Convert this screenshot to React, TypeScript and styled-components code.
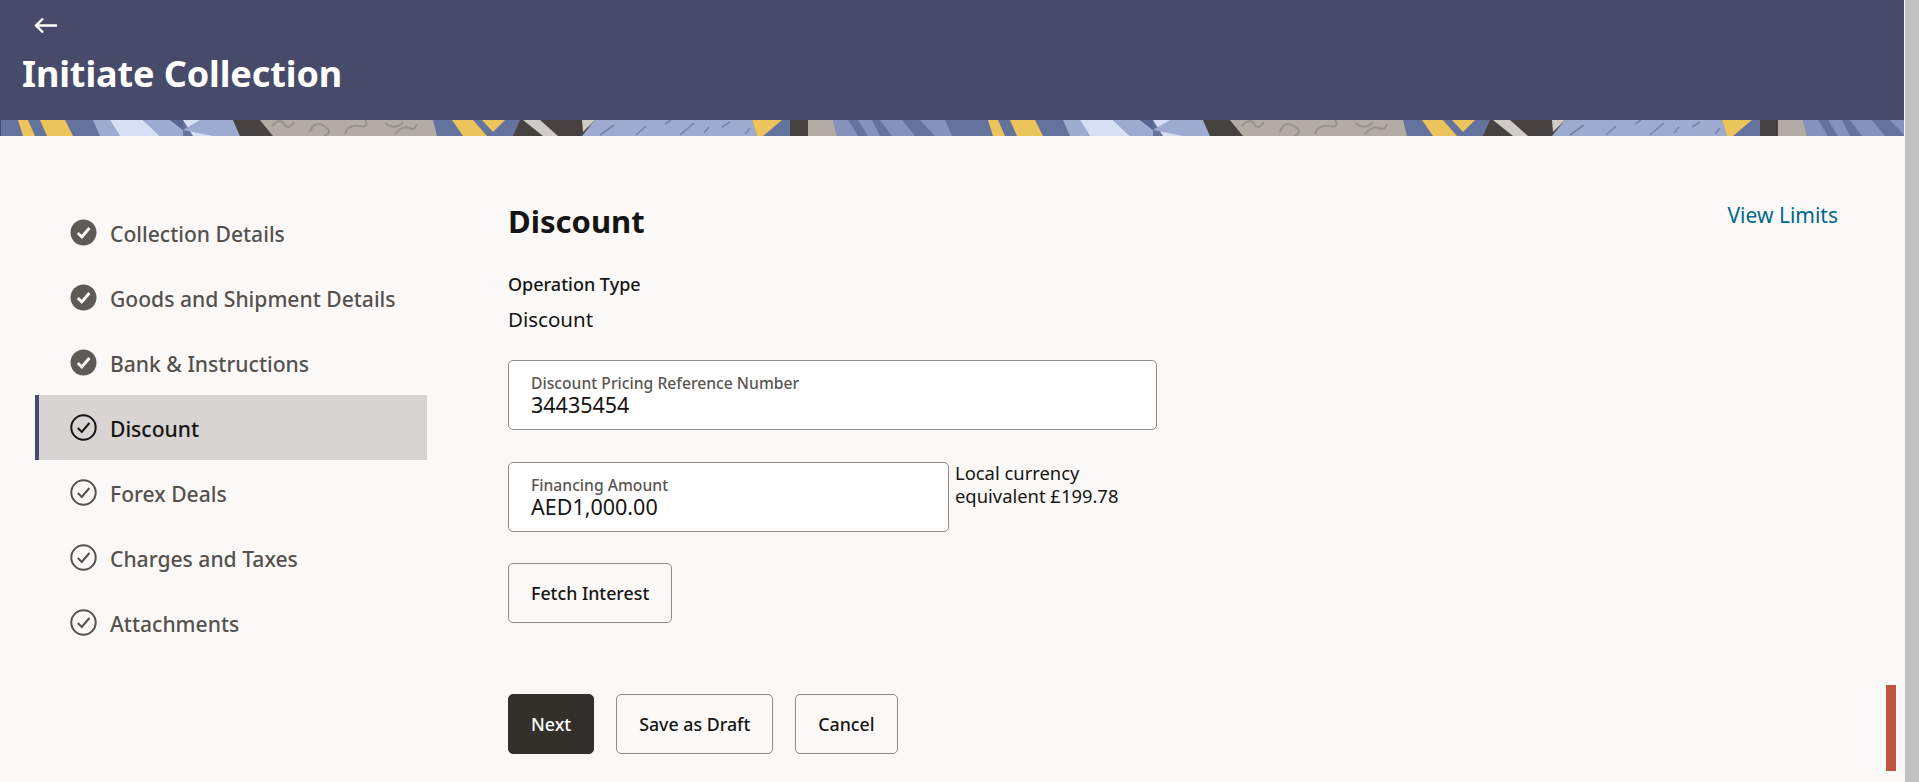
import React from 'react';
import styled, { createGlobalStyle } from 'styled-components';

const GlobalStyle = createGlobalStyle`
  html, body {
    margin: 0;
    height: 100%;
    overflow: hidden;
    background: #fbf9f8;
    font-family: "Noto Sans", "Open Sans", Arial, sans-serif;
  }
`;

const Shell = styled.div`
  display: flex;
  height: 782px;
  width: 1919px;
`;

const Page = styled.div`
  flex: 1;
  min-width: 0;
  display: flex;
  flex-direction: column;
`;

const ScrollTrack = styled.div`
  width: 14px;
  margin-left: 1px;
  background: #c1c1c1;
`;

const Banner = styled.header`
  background: #474b69;
  height: 120px;
  box-sizing: border-box;
  padding: 16px 0 0 22px;
  color: #fff;
`;

const BackButton = styled.button`
  display: block;
  border: 0;
  background: none;
  color: #fff;
  padding: 0 0 0 12px;
  height: 18px;
  cursor: pointer;
`;

const PageTitle = styled.h1`
  margin: 18px 0 0;
  font-size: 36px;
  line-height: 44px;
  font-weight: 700;
  letter-spacing: -0.1px;
`;

const Strip = styled.svg`
  display: block;
  width: 100%;
  height: 16px;
  background: #474b69;
`;

const Body = styled.div`
  flex: 1;
  position: relative;
  display: flex;
`;

const Sidebar = styled.nav`
  width: 392px;
  margin-left: 35px;
  padding-top: 64px;
`;

const StepRow = styled.div<{ $active?: boolean }>`
  display: flex;
  align-items: center;
  gap: 13px;
  height: 65px;
  box-sizing: border-box;
  padding-left: 31px;
  border-left: 4px solid ${p => (p.$active ? '#474b69' : 'transparent')};
  background: ${p => (p.$active ? '#d8d4d3' : 'transparent')};
  color: ${p => (p.$active ? '#161513' : '#55514e')};
  font-size: 21.1px;
  font-weight: 500;
`;

const StepName = styled.span`
  padding-top: 1px;
`;

const Main = styled.main`
  flex: 1;
  margin-left: 81px;
  padding: 65px 66px 0 0;
`;

const TitleRow = styled.div`
  display: flex;
  justify-content: space-between;
  align-items: flex-start;
`;

const SectionTitle = styled.h2`
  margin: 0;
  font-size: 31px;
  line-height: 40px;
  font-weight: 700;
  color: #161513;
`;

const LimitsLink = styled.a`
  margin-top: 1px;
  font-size: 21px;
  line-height: 26px;
  color: #00688c;
  cursor: pointer;
`;

const FieldLabel = styled.div`
  margin-top: 31px;
  font-size: 18px;
  line-height: 24px;
  font-weight: 500;
  color: #161513;
`;

const FieldValue = styled.div`
  margin-top: 9px;
  font-size: 20.5px;
  line-height: 28px;
  color: #161513;
`;

const InputBox = styled.div<{ $width: number }>`
  width: ${p => p.$width}px;
  height: 70px;
  box-sizing: border-box;
  padding: 12px 22px 0;
  background: #fff;
  border: 1px solid #8f8c89;
  border-radius: 5px;
`;

const InputLabel = styled.div`
  font-size: 15.7px;
  line-height: 20px;
  font-weight: 500;
  color: #5b5652;
`;

const InputValue = styled.div`
  font-size: 21.5px;
  line-height: 24px;
  color: #161513;
`;

const FirstField = styled.div`
  margin-top: 27px;
`;

const AmountRow = styled.div`
  display: flex;
  align-items: flex-start;
  gap: 6px;
  margin-top: 32px;
`;

const AmountNote = styled.div`
  width: 190px;
  margin-top: -1px;
  font-size: 18.4px;
  line-height: 23px;
  color: #161513;
`;

const ActionButton = styled.button<{ $primary?: boolean }>`
  height: 60px;
  box-sizing: border-box;
  padding: 0 22px;
  border: 1px solid ${p => (p.$primary ? '#332f2b' : '#8f8c89')};
  border-radius: 5px;
  background: ${p => (p.$primary ? '#332f2b' : 'transparent')};
  color: ${p => (p.$primary ? '#fff' : '#161513')};
  font-family: inherit;
  font-size: 17.8px;
  font-weight: 500;
  cursor: pointer;
`;

const FetchRow = styled.div`
  margin-top: 31px;
`;

const Actions = styled.div`
  display: flex;
  gap: 22px;
  margin-top: 71px;
`;

const SideTab = styled.div`
  position: absolute;
  right: 8px;
  top: 549px;
  width: 10px;
  height: 86px;
  background: #c0543c;
`;

const SLATE = '#64739d';
const YELLOW = '#ecc45c';
const PALE = '#d6dff4';
const PERI = '#9dabd0';
const DARK = '#464341';
const STONE = '#b2aca4';
const CHALK = '#cfccc6';

const StripArt = () => (
  <Strip viewBox="0 0 1904 16" preserveAspectRatio="none" aria-hidden="true">
    <defs>
      <filter id="soft">
        <feGaussianBlur stdDeviation="0.55" />
      </filter>
      <pattern id="tile" x="0" y="0" width="970" height="16" patternUnits="userSpaceOnUse">
        <rect width="970" height="16" fill={SLATE} />
        <polygon points="18,0 28,0 35,16 23,16" fill={YELLOW} />
        <polygon points="40,0 65,0 73,16 47,16" fill={YELLOW} />
        <polygon points="93,0 110,0 120,16 100,16" fill={PERI} />
        <polygon points="110,0 143,0 160,16 120,16" fill={PALE} />
        <polygon points="143,0 170,0 183,10 183,16 160,16" fill={PERI} />
        <polygon points="170,0 183,0 183,10" fill="#566690" />
        <polygon points="183,0 200,0 213,16 193,16" fill={PALE} />
        <polygon points="200,0 233,0 240,16 213,16 183,10" fill={PERI} />
        <polygon points="233,0 260,0 273,16 240,16" fill={DARK} />
        <polygon points="260,0 433,0 437,16 273,16" fill={STONE} />
        <g fill="none" stroke="#96928c" strokeWidth="2">
          <path d="M272 6q8 -9 12 -2t10 -2M310 12q4 -12 14 -6t0 10M345 14q3 -10 14 -8t6 -6M385 3q10 8 18 -1M395 14q8 -9 14 -6t8 -4" />
        </g>
        <polygon points="452,0 473,0 487,16 463,16" fill={YELLOW} />
        <polygon points="482,0 505,0 493,12" fill={YELLOW} />
        <polygon points="520,0 595,0 583,16 513,16" fill={DARK} />
        <polygon points="523,0 540,0 558,16 543,16" fill={CHALK} />
        <polygon points="582,0 595,0 583,12" fill={CHALK} />
        <polygon points="595,0 752,0 757,16 582,16" fill={PERI} />
        <g fill="none" stroke="#7583ac" strokeWidth="1.6">
          <path d="M600 15l14 -10M636 15l10 -9M665 4l6 -4M680 15l14 -12M704 13l5 -6M722 7l8 -5M745 14l5 -6" />
        </g>
        <polygon points="752,0 782,0 763,16 757,16" fill={YELLOW} />
        <polygon points="790,0 808,0 808,16 790,16" fill={DARK} />
        <polygon points="808,0 833,0 837,16 808,16" fill={STONE} />
        <polygon points="833,0 970,0 970,16 837,16" fill="#8592bd" />
        <g fill={SLATE}>
          <polygon points="848,0 858,0 868,16 858,16" />
          <polygon points="872,0 880,0 892,16 880,16" />
          <polygon points="902,0 920,0 935,16 915,16" />
          <polygon points="945,0 970,0 970,16 952,16" />
        </g>
      </pattern>
    </defs>
    <rect x="1" width="1903" height="16" fill="url(#tile)" filter="url(#soft)" />
  </Strip>
);

const StepIcon = ({ state }: { state: 'done' | 'active' | 'todo' }) => {
  const ink = state === 'active' ? '#161513' : '#55514e';
  return (
    <svg width="27" height="27" viewBox="0 0 27 27" aria-hidden="true">
      <circle
        cx="13.5"
        cy="13.5"
        r={state === 'done' ? 13 : 12.2}
        fill={state === 'done' ? '#5e5a56' : 'none'}
        stroke={ink}
        strokeWidth={state === 'done' ? 0 : 2}
      />
      <path
        d="M7.8 14l4 4 7.6 -9"
        fill="none"
        stroke={state === 'done' ? '#fff' : ink}
        strokeWidth={state === 'done' ? 2.8 : 2}
      />
    </svg>
  );
};

const steps: { name: string; state: 'done' | 'active' | 'todo' }[] = [
  { name: 'Collection Details', state: 'done' },
  { name: 'Goods and Shipment Details', state: 'done' },
  { name: 'Bank & Instructions', state: 'done' },
  { name: 'Discount', state: 'active' },
  { name: 'Forex Deals', state: 'todo' },
  { name: 'Charges and Taxes', state: 'todo' },
  { name: 'Attachments', state: 'todo' },
];

const App = () => (
  <Shell>
    <GlobalStyle />
    <Page>
      <Banner>
        <BackButton aria-label="Back">
          <svg width="24" height="17" viewBox="0 0 24 17" style={{ display: 'block' }}>
            <path d="M9 1.5L2 8.5l7 7M2 8.5h21" fill="none" stroke="#fff" strokeWidth="2.4" />
          </svg>
        </BackButton>
        <PageTitle>Initiate Collection</PageTitle>
      </Banner>
      <StripArt />
      <Body>
        <Sidebar>
          {steps.map(s => (
            <StepRow key={s.name} $active={s.state === 'active'}>
              <StepIcon state={s.state} />
              <StepName>{s.name}</StepName>
            </StepRow>
          ))}
        </Sidebar>
        <Main>
          <TitleRow>
            <SectionTitle>Discount</SectionTitle>
            <LimitsLink>View Limits</LimitsLink>
          </TitleRow>
          <FieldLabel>Operation Type</FieldLabel>
          <FieldValue>Discount</FieldValue>
          <FirstField>
            <InputBox $width={649}>
              <InputLabel>Discount Pricing Reference Number</InputLabel>
              <InputValue>34435454</InputValue>
            </InputBox>
          </FirstField>
          <AmountRow>
            <InputBox $width={441}>
              <InputLabel>Financing Amount</InputLabel>
              <InputValue>AED1,000.00</InputValue>
            </InputBox>
            <AmountNote>Local currency equivalent £199.78</AmountNote>
          </AmountRow>
          <FetchRow>
            <ActionButton>Fetch Interest</ActionButton>
          </FetchRow>
          <Actions>
            <ActionButton $primary>Next</ActionButton>
            <ActionButton>Save as Draft</ActionButton>
            <ActionButton>Cancel</ActionButton>
          </Actions>
        </Main>
        <SideTab />
      </Body>
    </Page>
    <ScrollTrack />
  </Shell>
);

export default App;
